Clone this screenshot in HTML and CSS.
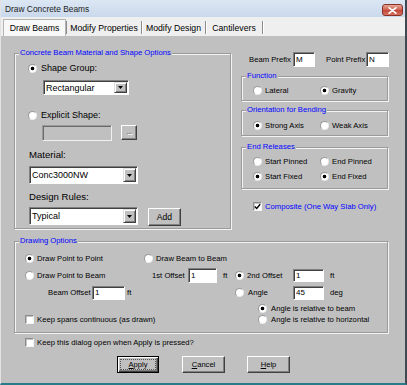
FILE: index.html
```html
<!DOCTYPE html>
<html>
<head>
<meta charset="utf-8">
<title>Draw Concrete Beams</title>
<link rel="stylesheet" href="styles.css">
</head>
<body>
<div class="win">
  <div class="titlebar">
    <span class="title">Draw Concrete Beams</span>
    <span class="close"><svg width="9" height="7" viewBox="0 0 9 7"><path d="M1.2 0.8 L7.8 6.2 M7.8 0.8 L1.2 6.2" stroke="#fff" stroke-width="1.7" stroke-linecap="round"/></svg></span>
  </div>
  <div class="tabs">
    <div class="tab active">Draw Beams</div>
    <div class="tab t-mp">Modify Properties</div>
    <div class="tab t-md">Modify Design</div>
    <div class="tab t-ca">Cantilevers</div>
  </div>
  <div class="panel">
    <div class="toprow">
      <div class="group g-mat">
        <div class="legend">Concrete Beam Material and Shape Options</div>
        <div class="opt big r-shape"><span class="radio on"></span>Shape Group:</div>
        <div class="combo c-rect"><span class="ctext">Rectangular</span><span class="dd"><svg width="5" height="3" viewBox="0 0 5 3"><path d="M0 0 H5 L2.5 3 Z" fill="#000"/></svg></span></div>
        <div class="opt big r-explicit"><span class="radio"></span>Explicit Shape:</div>
        <div class="shape-row"><span class="edit disabled e-shape"></span><span class="btn b-dots">...</span></div>
        <div class="lbl l-mat">Material:</div>
        <div class="combo c-mat"><span class="ctext">Conc3000NW</span><span class="dd"><svg width="5" height="3" viewBox="0 0 5 3"><path d="M0 0 H5 L2.5 3 Z" fill="#000"/></svg></span></div>
        <div class="lbl l-rules">Design Rules:</div>
        <div class="rules-row">
          <div class="combo c-rules"><span class="ctext">Typical</span><span class="dd"><svg width="5" height="3" viewBox="0 0 5 3"><path d="M0 0 H5 L2.5 3 Z" fill="#000"/></svg></span></div>
          <span class="btn b-add">Add</span>
        </div>
      </div>
      <div class="rightcol">
        <div class="prefix-row">
          <span class="plabel pl-beam">Beam Prefix</span><span class="edit e-pre1">M</span>
          <span class="plabel pl-point">Point Prefix</span><span class="edit e-pre2">N</span>
        </div>
        <div class="group g-func">
          <div class="legend">Function</div>
          <div class="pair"><div class="opt"><span class="radio"></span>Lateral</div><div class="opt"><span class="radio on"></span>Gravity</div></div>
        </div>
        <div class="group g-orient">
          <div class="legend">Orientation for Bending</div>
          <div class="pair"><div class="opt"><span class="radio on"></span>Strong Axis</div><div class="opt"><span class="radio"></span>Weak Axis</div></div>
        </div>
        <div class="group g-end">
          <div class="legend">End Releases</div>
          <div class="pair"><div class="opt"><span class="radio"></span>Start Pinned</div><div class="opt"><span class="radio"></span>End Pinned</div></div>
          <div class="pair"><div class="opt"><span class="radio on"></span>Start Fixed</div><div class="opt"><span class="radio on"></span>End Fixed</div></div>
        </div>
        <div class="opt composite"><span class="check on"><svg width="7" height="7" viewBox="0 0 7 7"><path d="M0.8 3.4 L2.7 5.4 L6.2 1.2" fill="none" stroke="#000" stroke-width="1.4"/></svg></span>Composite (One Way Slab Only)</div>
      </div>
    </div>

    <div class="group g-draw">
      <div class="legend">Drawing Options</div>
      <div class="cell a-p2p"><span class="radio on"></span>Draw Point to Point</div>
      <div class="cell a-b2b"><span class="radio"></span>Draw Beam to Beam</div>
      <div class="cell a-p2b"><span class="radio"></span>Draw Point to Beam</div>
      <div class="cell a-off1"><span class="flabel fl-off1">1st Offset</span><span class="edit e-off1">1</span><span class="unit">ft</span></div>
      <div class="cell a-off2"><span class="radio on"></span><span class="flabel fl-off2">2nd Offset</span><span class="edit e-off2">1</span><span class="unit">ft</span></div>
      <div class="cell a-boff"><span class="flabel fl-boff">Beam Offset</span><span class="edit e-boff">1</span><span class="unit u-boff">ft</span></div>
      <div class="cell a-ang"><span class="radio r-ang"></span><span class="flabel fl-ang">Angle</span><span class="edit e-ang">45</span><span class="unit">deg</span></div>
      <div class="cell a-rel1"><span class="radio on r-sub"></span>Angle is relative to beam</div>
      <div class="cell a-keep"><span class="check"></span>Keep spans continuous (as drawn)</div>
      <div class="cell a-rel2"><span class="radio r-sub"></span>Angle is relative to horizontal</div>
    </div>

    <div class="opt keep-open"><span class="check"></span>Keep this dialog open when Apply is pressed?</div>

    <div class="buttons">
      <span class="btn default b-apply"><span class="focus"><u>A</u>pply</span></span>
      <span class="btn b-cancel"><u>C</u>ancel</span>
      <span class="btn b-help"><u>H</u>elp</span>
    </div>
  </div>
</div>
</body>
</html>
```

FILE: styles.css
```css
* { box-sizing: border-box; }
html, body { margin: 0; padding: 0; }
body {
  width: 407px;
  height: 385px;
  overflow: hidden;
  background: #fff;
  font-family: "Liberation Sans", Arial, sans-serif;
  font-size: 7.7px;
  color: #000;
}
.win {
  width: 407px;
  height: 385px;
  display: flex;
  flex-direction: column;
  border-left: 1px solid #e2e2e2;
  border-right: 2px solid #3e4a52;
  border-bottom: 2px solid #2a7b8a;
  background: #c0c0c0;
}
.titlebar {
  height: 17px;
  flex: none;
  display: flex;
  align-items: center;
  justify-content: space-between;
  background: linear-gradient(#dce7f4, #c9d8eb);
  padding: 1px 2px 0 4px;
}
.title { font-size: 8.4px; color: #1c1c1c; }
.close {
  align-self: flex-start;
  margin-top: 3px;
  width: 21px;
  height: 12px;
  border-radius: 3px;
  border: 1px solid #8a3028;
  background: linear-gradient(#e8a896, #d06656 45%, #c24a3c 55%, #d8735f);
  display: flex;
  align-items: center;
  justify-content: center;
}
.tabs {
  height: 19px;
  flex: none;
  display: flex;
  align-items: flex-end;
  background: #efefef;
  padding-left: 2px;
}
.tab {
  height: 13px;
  margin-bottom: 2px;
  display: flex;
  align-items: center;
  justify-content: center;
  font-size: 8.7px;
  white-space: nowrap;
  border-right: 1px solid #8c8c8c;
  box-shadow: 1px 0 0 #fff;
}
.tab.active {
  width: 63px;
  height: 17px;
  margin-bottom: 0;
  background: #f8f8f8;
  border: 1px solid #b4b4b4;
  border-bottom: none;
  box-shadow: none;
}
.t-mp { width: 76px; border-left: 1px solid #8c8c8c; }
.t-md { width: 64px; }
.t-ca { width: 57px; }

.panel {
  flex: 1;
  padding: 16px 0 0 13px;
}
.toprow { display: flex; align-items: flex-start; }

.group {
  position: relative;
  border: 1px solid #9a9a9a;
  box-shadow: inset 1px 1px 0 #f4f4f4, 1px 1px 0 #f4f4f4;
}
.legend {
  position: absolute;
  top: -6px;
  left: 4px;
  padding: 0 1px;
  background: #c0c0c0;
  color: #0000ff;
  line-height: 10px;
  white-space: nowrap;
}

.opt { display: flex; align-items: center; white-space: nowrap; height: 10px; }
.big { font-size: 9px; height: 12px; }
.lbl { font-size: 9.6px; height: 12px; line-height: 12px; white-space: nowrap; }

.radio {
  width: 9px;
  height: 9px;
  flex: none;
  border-radius: 50%;
  background: #fff;
  border: 1px solid;
  border-color: #9a9a9a #ececec #ececec #9a9a9a;
  margin-right: 3px;
}
.radio.on { background: radial-gradient(circle at center, #000 0 1.4px, #fff 2.2px); }
.big .radio { margin-right: 4px; }

.check {
  width: 9px;
  height: 9px;
  flex: none;
  background: #fff;
  border: 1px solid;
  border-color: #8c8c8c #f4f4f4 #f4f4f4 #8c8c8c;
  box-shadow: inset 1px 1px 0 #c4c4c4;
  margin-right: 3px;
  display: flex;
  align-items: center;
  justify-content: center;
}

.edit {
  flex: none;
  display: flex;
  align-items: center;
  background: #fff;
  border: 1px solid;
  border-color: #808080 #fff #fff #808080;
  box-shadow: inset 1px 1px 0 #404040;
  padding-left: 2px;
  font-size: 8px;
}
.edit.disabled { background: #c0c0c0; box-shadow: inset 1px 1px 0 #6a6a6a; border-color: #9a9a9a #f0f0f0 #f0f0f0 #9a9a9a; }

.combo {
  display: flex;
  align-items: stretch;
  background: #fff;
  border: 1px solid;
  border-color: #808080 #fff #fff #808080;
  box-shadow: inset 1px 1px 0 #404040;
  padding: 1px;
}
.ctext { flex: 1; display: flex; align-items: center; padding-left: 1px; font-size: 9px; }
.dd {
  width: 13px;
  flex: none;
  background: #c0c0c0;
  border: 1px solid;
  border-color: #dfdfdf #404040 #404040 #dfdfdf;
  box-shadow: inset 1px 1px 0 #fff, inset -1px -1px 0 #808080;
  display: flex;
  align-items: center;
  justify-content: center;
}

.btn {
  flex: none;
  display: flex;
  align-items: center;
  justify-content: center;
  background: #c0c0c0;
  border: 1px solid;
  border-color: #fff #404040 #404040 #fff;
  box-shadow: inset -1px -1px 0 #808080;
  font-size: 7.6px;
}
.btn.default {
  border: 1px solid #000;
  box-shadow: inset 1px 1px 0 #fff, inset -1px -1px 0 #404040, inset -2px -2px 0 #808080;
  padding: 2px;
}
.focus {
  align-self: stretch;
  flex: 1;
  display: flex;
  align-items: center;
  justify-content: center;
  border: 1px dotted #555;
}
u { text-decoration: underline; text-underline-offset: 1px; }

/* material group */
.g-mat { width: 217px; height: 176px; margin-top: 1px; padding-top: 8px; flex: none; }
.r-shape { padding-left: 13px; }
.c-rect { width: 86px; height: 15px; margin: 6px 0 0 28px; }
.r-explicit { margin-top: 14px; padding-left: 13px; }
.shape-row { display: flex; align-items: flex-start; margin-top: 4px; padding-left: 27px; }
.e-shape { width: 70px; height: 16px; }
.b-dots {
  width: 16px;
  height: 15px;
  margin-left: 9px;
  color: #8a8a8a;
  text-shadow: 1px 1px 0 #fff;
  font-size: 8px;
  font-weight: bold;
  letter-spacing: -0.5px;
  padding-bottom: 2px;
}
.l-mat { margin-top: 8px; padding-left: 14px; }
.c-mat { width: 109px; height: 18px; margin: 5px 0 0 14px; }
.l-rules { margin-top: 7px; padding-left: 14px; }
.rules-row { display: flex; align-items: flex-start; margin-top: 4px; padding-left: 14px; }
.c-rules { width: 109px; height: 18px; }
.b-add { width: 33px; height: 18px; margin: 1px 0 0 10px; font-size: 8.6px; }

/* right column */
.rightcol { width: 147px; margin-left: 10px; flex: none; }
.prefix-row { display: flex; align-items: center; height: 15px; white-space: nowrap; }
.plabel { flex: none; }
.pl-beam { width: 44px; margin-left: 8px; }
.e-pre1 { width: 22px; height: 15px; }
.pl-point { width: 40px; margin-left: 11px; }
.e-pre2 { width: 23px; height: 15px; }

.g-func { margin-top: 9px; height: 25px; padding-top: 8px; }
.g-orient { margin-top: 9px; height: 26px; padding-top: 9px; }
.g-end { margin-top: 11px; height: 42px; padding-top: 8px; display: flex; flex-direction: column; gap: 5px; }
.pair { display: flex; padding-left: 11px; }
.pair .opt { width: 71px; }
.composite { margin-top: 13px; padding-left: 12px; height: 9px; color: #0000ff; }

/* drawing options */
.g-draw {
  width: 374px;
  height: 92px;
  margin-top: 12px;
  padding: 8px 0 0 10px;
  display: grid;
  grid-template-columns: 119px 91px 1fr;
  grid-template-rows: 17px 16px 19px 12px 10px;
  grid-template-areas:
    "p2p b2b ."
    "p2b off1 off2"
    "boff . ang"
    ". . rel1"
    "keep keep rel2";
}
.cell { display: flex; align-items: center; white-space: nowrap; }
.a-p2p { grid-area: p2p; }
.a-b2b { grid-area: b2b; }
.a-p2b { grid-area: p2b; }
.a-off1 { grid-area: off1; padding-left: 8px; }
.a-off2 { grid-area: off2; }
.a-boff { grid-area: boff; padding-left: 23px; }
.a-ang { grid-area: ang; }
.a-rel1 { grid-area: rel1; padding-left: 23px; }
.a-rel2 { grid-area: rel2; padding-left: 23px; }
.a-keep { grid-area: keep; }
.r-sub { margin-right: 4px; }
.r-ang { margin-right: 4px; }
.flabel { flex: none; }
.fl-off1 { width: 36px; }
.fl-off2 { width: 46px; }
.fl-ang { width: 45px; }
.fl-boff { width: 44px; }
.e-off1 { width: 29px; height: 15px; }
.e-off2 { width: 31px; height: 13px; }
.e-ang { width: 31px; height: 14px; }
.e-boff { width: 33px; height: 14px; }
.unit { margin-left: 6px; }
.u-boff { margin-left: 2px; }

.keep-open { margin: 5px 0 0 11px; height: 9px; }

.buttons { display: flex; margin: 9px 0 0 103px; }
.buttons .btn { height: 17px; }
.b-apply { width: 42px; }
.b-cancel { width: 43px; margin-left: 23px; }
.b-help { width: 43px; margin-left: 22px; }
```
